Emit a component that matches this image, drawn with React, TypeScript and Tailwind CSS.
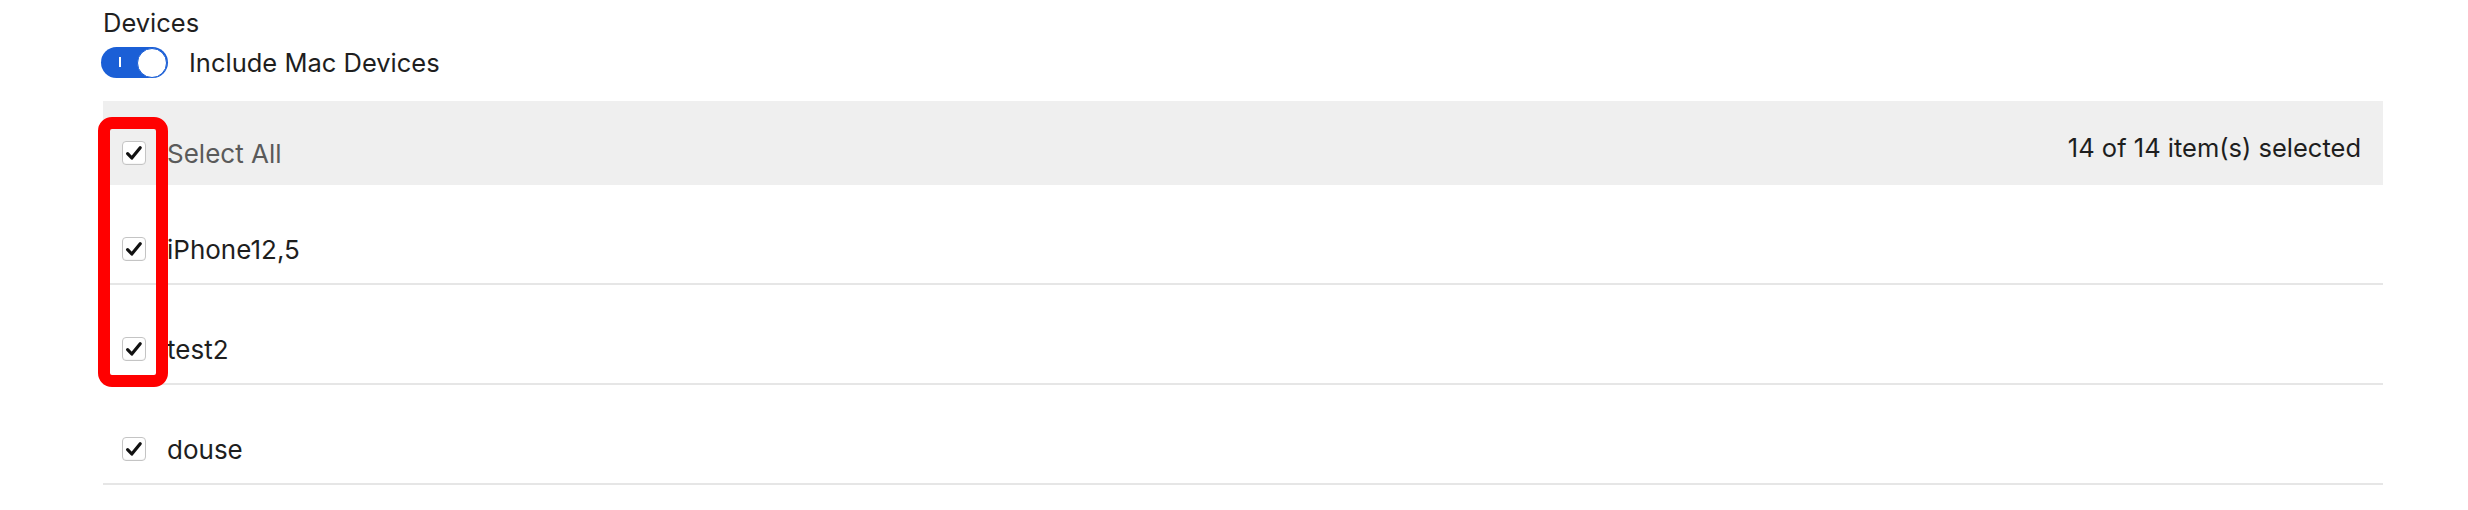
import React from "react";

const font = { fontFamily: "Inter, 'Noto Sans', sans-serif" };

function CheckBox() {
  return (
    <div className="w-[24px] h-[24px] shrink-0 rounded-[4px] border border-[#c4c4c4] bg-white flex items-center justify-center shadow-[inset_0_-1px_1px_rgba(0,0,0,0.04)]">
      <svg width="18" height="16" viewBox="0 0 18 16">
        <path d="M2.6 8.6 L6.8 13 L15.2 2.8" fill="none" stroke="#111" strokeWidth="3.2" strokeLinecap="round" strokeLinejoin="round" />
      </svg>
    </div>
  );
}

function Row({ label }: { label: string }) {
  return (
    <div className="h-[100px] border-b-2 border-[#e6e6e6] flex items-center pt-[30px] pl-[19px] gap-[21px]">
      <CheckBox />
      <span className="text-[26px] text-[#1e1e1e]">{label}</span>
    </div>
  );
}

export default function App() {
  return (
    <div className="relative w-[2468px] h-[510px] bg-white" style={font}>
      <div className="pl-[103px] pr-[85px] pt-[8px]">
        <div className="text-[25.5px] leading-[30px] text-[#1f1f1f]">Devices</div>
        <div className="flex items-center gap-[21px] mt-[9px] ml-[-2px]">
          <div className="relative w-[67px] h-[31px] rounded-full bg-[#1b5fd6] flex items-center">
            <div className="absolute left-[18px] top-[10px] w-[2px] h-[10px] bg-white" />
            <div className="absolute right-[1px] top-[0.5px] w-[30px] h-[30px] rounded-full bg-white border border-[#1b5fd6]" />
          </div>
          <span className="text-[25.5px] leading-[30px] text-[#1e1e1e]">Include Mac Devices</span>
        </div>
        <div className="mt-[23px]">
          <div className="h-[84px] bg-[#efefef] flex items-center pt-[20px] pl-[19px] pr-[22px] gap-[21px]">
            <CheckBox />
            <span className="text-[26px] text-[#5a5a5a]">Select All</span>
            <span className="ml-auto text-[25.5px] text-[#1e1e1e] mt-[-10px]">14 of 14 item(s) selected</span>
          </div>
          <Row label="iPhone12,5" />
          <Row label="test2" />
          <Row label="douse" />
        </div>
      </div>
      <div className="absolute left-[98px] top-[117px] w-[70px] h-[270px] border-[12px] border-[#ff0000] rounded-[14px]" />
    </div>
  );
}
